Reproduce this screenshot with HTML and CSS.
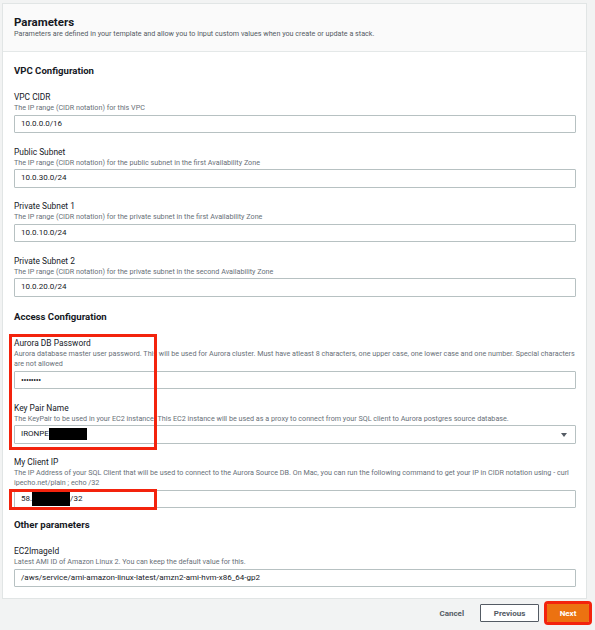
FILE: index.html
```html
<!DOCTYPE html>
<html lang="en">
<head>
<meta charset="utf-8">
<title>Parameters</title>
<link rel="stylesheet" href="styles.css">
</head>
<body>
<div class="page">
  <section class="card">
    <header class="card-head">
      <h2 class="card-title">Parameters</h2>
      <p class="card-sub">Parameters are defined in your template and allow you to input custom values when you create or update a stack.</p>
    </header>
    <div class="card-body">
      <h3 class="section-title">VPC Configuration</h3>
      <div class="field">
        <div class="label">VPC CIDR</div>
        <div class="desc">The IP range (CIDR notation) for this VPC</div>
        <div class="input">10.0.0.0/16</div>
      </div>
      <div class="field">
        <div class="label">Public Subnet</div>
        <div class="desc">The IP range (CIDR notation) for the public subnet in the first Availability Zone</div>
        <div class="input">10.0.30.0/24</div>
      </div>
      <div class="field">
        <div class="label">Private Subnet 1</div>
        <div class="desc">The IP range (CIDR notation) for the private subnet in the first Availability Zone</div>
        <div class="input">10.0.10.0/24</div>
      </div>
      <div class="field">
        <div class="label">Private Subnet 2</div>
        <div class="desc">The IP range (CIDR notation) for the private subnet in the second Availability Zone</div>
        <div class="input">10.0.20.0/24</div>
      </div>

      <h3 class="section-title">Access Configuration</h3>
      <div class="hl-group">
        <div class="field">
          <div class="label">Aurora DB Password</div>
          <div class="desc">Aurora database master user password. This will be used for Aurora cluster. Must have atleast 8 characters, one upper case, one lower case and one number. Special characters are not allowed</div>
          <div class="input password">••••••••</div>
        </div>
        <div class="field field-last">
          <div class="label">Key Pair Name</div>
          <div class="desc">The KeyPair to be used in your EC2 instance. This EC2 instance will be used as a proxy to connect from your SQL client to Aurora postgres source database.</div>
          <div class="input select">IRONPE<span class="redact redact-key"></span><span class="caret"></span></div>
        </div>
        <div class="hl-box hl-box-access"></div>
      </div>
      <div class="field field-tight">
        <div class="label">My Client IP</div>
        <div class="desc">The IP Address of your SQL Client that will be used to connect to the Aurora Source DB. On Mac, you can run the following command to get your IP in CIDR notation using - curl ipecho.net/plain ; echo /32</div>
        <div class="input-wrap">
          <div class="input">58.<span class="redact redact-ip"></span>/32</div>
          <div class="hl-box hl-box-ip"></div>
        </div>
      </div>

      <h3 class="section-title">Other parameters</h3>
      <div class="field field-last">
        <div class="label">EC2ImageId</div>
        <div class="desc">Latest AMI ID of Amazon Linux 2. You can keep the default value for this.</div>
        <div class="input">/aws/service/ami-amazon-linux-latest/amzn2-ami-hvm-x86_64-gp2</div>
      </div>
    </div>
  </section>
  <div class="actions">
    <span class="btn-link">Cancel</span>
    <span class="btn btn-normal">Previous</span>
    <span class="btn btn-primary">Next</span>
  </div>
</div>
</body>
</html>
```

FILE: styles.css
```css
* { box-sizing: border-box; }
html, body { margin: 0; padding: 0; }
body {
  background: #f2f3f3;
  font-family: Roboto, "Noto Sans", "Liberation Sans", sans-serif;
  color: #16191f;
  width: 595px;
  height: 630px;
  overflow: hidden;
}
.page {
  padding: 3px 6px 0 2px;
}
.card {
  width: 585px;
  background: #ffffff;
  border: 1px solid #e1e5e5;
}
.card-head {
  background: #fafafa;
  border-bottom: 1px solid #e4e8e8;
  padding: 11px 11px 11px 11px;
  height: 48px;
}
.card-title {
  margin: 0;
  font-size: 11.5px;
  line-height: 14px;
  font-weight: 700;
  color: #16191f;
}
.card-sub {
  margin: 0;
  font-size: 7.2px;
  line-height: 10px;
  color: #545b64;
}
.card-body {
  padding: 12px 10px 11px 11px;
}
.section-title {
  margin: 0 0 14px 0;
  font-size: 9.6px;
  line-height: 14px;
  font-weight: 700;
  color: #16191f;
}
.field {
  margin-bottom: 13.5px;
}
.field-last { margin-bottom: 0; }
.field-tight { margin-bottom: 10px; }
.hl-group + .field { margin-top: 13.5px; }
.field-last + .section-title { margin-top: 12px; }
.label {
  font-size: 8.4px;
  line-height: 11px;
  color: #16191f;
}
.desc {
  font-size: 7.2px;
  line-height: 10px;
  color: #687078;
}
.input {
  margin-top: 1.5px;
  height: 18.5px;
  border: 1px solid #b7c1c2;
  border-radius: 1px;
  padding: 0 6px;
  font-size: 8px;
  line-height: 16.5px;
  color: #16191f;
  background: #fff;
  display: flex;
  align-items: center;
  white-space: nowrap;
}
.password {
  font-size: 8.5px;
  letter-spacing: -0.4px;
}
.select { position: relative; }
.caret {
  position: absolute;
  right: 8px;
  top: 7px;
  width: 0;
  height: 0;
  border-left: 3px solid transparent;
  border-right: 3px solid transparent;
  border-top: 4px solid #545b64;
}
.redact {
  display: inline-block;
  background: #000;
}
.redact-key { width: 38px; height: 12px; }
.redact-ip { width: 38px; height: 15px; }
.hl-group { position: relative; }
.input-wrap { position: relative; }
.hl-box {
  position: absolute;
  border: 3px solid #f3230d;
  pointer-events: none;
}
.hl-box-access {
  left: -5px;
  top: -4px;
  width: 148px;
  bottom: -6px;
}
.hl-box-ip {
  left: -5px;
  top: -1px;
  width: 148px;
  bottom: -2px;
}
.actions {
  display: flex;
  justify-content: flex-end;
  align-items: center;
  padding: 5px 0 0 0;
}
.btn-link {
  font-size: 8px;
  font-weight: 700;
  color: #545b64;
  margin-right: 16px;
}
.btn {
  display: inline-flex;
  align-items: center;
  justify-content: center;
  height: 18px;
  font-size: 8px;
  font-weight: 700;
  border-radius: 1px;
}
.btn-normal {
  width: 59px;
  border: 1px solid #545b64;
  color: #545b64;
  background: #fff;
}
.btn-primary {
  width: 42px;
  margin-left: 8px;
  background: #ec7211;
  color: #fff;
  outline: 3px solid #f3230d;
  outline-offset: 0.5px;
}
```
